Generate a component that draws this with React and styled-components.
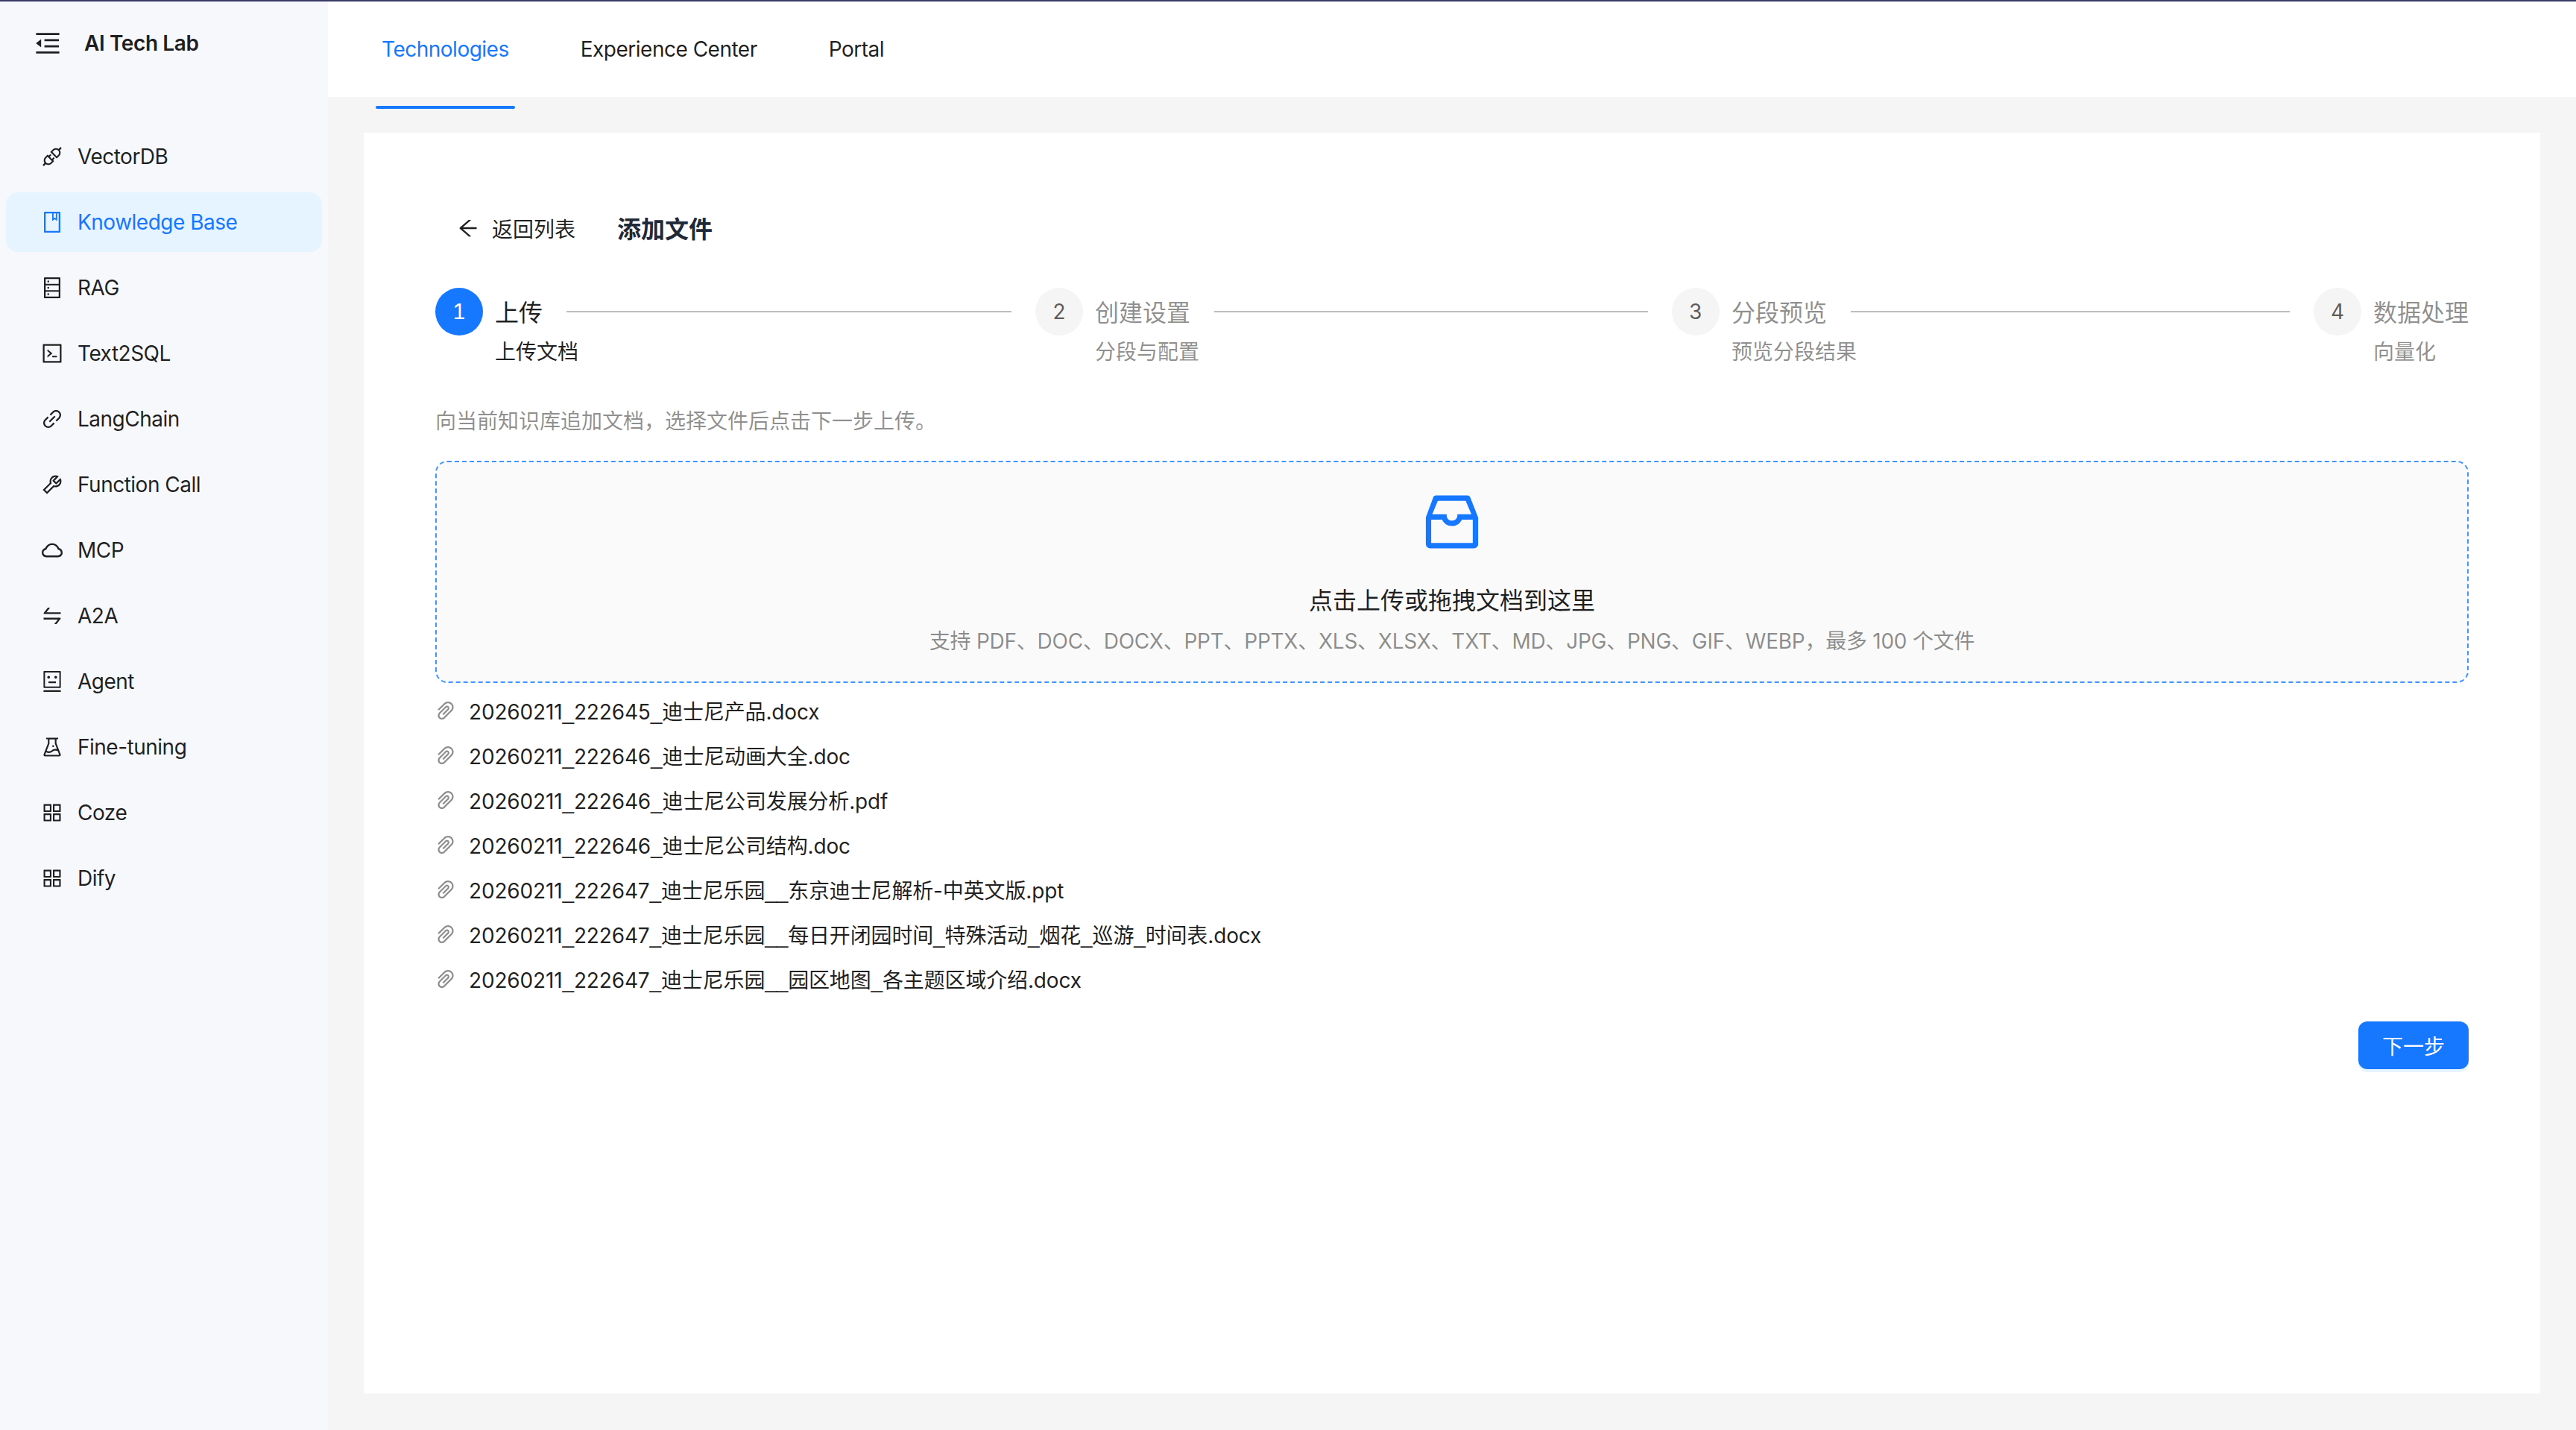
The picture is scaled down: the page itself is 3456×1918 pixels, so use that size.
import React from "react";
import styled, { createGlobalStyle } from "styled-components";
import {
  AiOutlineApi,
  AiOutlineAppstore,
  AiOutlineArrowLeft,
  AiOutlineBook,
  AiOutlineCloud,
  AiOutlineCode,
  AiOutlineDatabase,
  AiOutlineExperiment,
  AiOutlineInbox,
  AiOutlineLink,
  AiOutlineMenuFold,
  AiOutlinePaperClip,
  AiOutlineRobot,
  AiOutlineSwap,
  AiOutlineTool,
} from "react-icons/ai";

const GlobalStyle = createGlobalStyle`
  html, body, #root {
    margin: 0;
    height: 100%;
  }
  body {
    font-family: Inter, "Noto Sans CJK SC", sans-serif;
    font-size: 28px;
    color: rgba(0, 0, 0, 0.88);
  }
  * {
    box-sizing: border-box;
  }
`;

const Page = styled.div`
  display: flex;
  flex-direction: column;
  height: 100%;
  border-top: 2px solid #3a3a68;
  overflow: hidden;
`;

const Body = styled.div`
  display: flex;
  flex: 1;
  min-height: 0;
`;

const Sidebar = styled.aside`
  width: 440px;
  flex: none;
  background: #f6f8fc;
`;

const Brand = styled.div`
  display: flex;
  align-items: center;
  height: 112px;
  margin-bottom: 56px;
  padding-left: 44px;
  gap: 29px;
  font-weight: 600;
  letter-spacing: -0.4px;
  color: #1f1f1f;

  svg {
    flex: none;
  }
`;

const MenuList = styled.nav`
  display: flex;
  flex-direction: column;
  gap: 8px;
  padding: 0 8px;
`;

const MenuItem = styled.div`
  display: flex;
  align-items: center;
  gap: 18px;
  height: 80px;
  padding-left: 46px;
  border-radius: 16px;
  letter-spacing: -0.5px;
  background: ${(p) => (p.$active ? "#e6f4ff" : "transparent")};
  color: ${(p) => (p.$active ? "#1677ff" : "rgba(0, 0, 0, 0.88)")};
`;

const Main = styled.main`
  flex: 1;
  min-width: 0;
  display: flex;
  flex-direction: column;
  background: #f5f5f5;
`;

const Header = styled.header`
  display: flex;
  align-items: center;
  gap: 96px;
  height: 128px;
  flex: none;
  padding-left: 72px;
  background: #fff;
`;

const Tab = styled.div`
  position: relative;
  letter-spacing: -0.5px;
  color: ${(p) => (p.$active ? "#1677ff" : "rgba(0, 0, 0, 0.88)")};

  &::after {
    content: "";
    display: ${(p) => (p.$active ? "block" : "none")};
    position: absolute;
    left: -8px;
    right: -8px;
    top: 93px;
    height: 4px;
    border-radius: 2px;
    background: #1677ff;
  }
`;

const Content = styled.div`
  flex: 1;
  min-height: 0;
  padding: 48px 48px 49px;
`;

const Card = styled.section`
  height: 100%;
  padding: 96px 96px 0;
  background: #fff;
`;

const TitleRow = styled.div`
  display: flex;
  align-items: center;
  height: 64px;
  margin-bottom: 48px;
`;

const BackLink = styled.div`
  display: flex;
  align-items: center;
  gap: 16px;
  padding-left: 28px;
`;

const PageTitle = styled.h1`
  margin: 0 0 0 56px;
  padding-bottom: 2px;
  font-size: 32px;
  font-weight: 600;
  color: #1f2937;
`;

const Steps = styled.div`
  display: grid;
  grid-template-columns: 773px 854px 861px 240px;
`;

const Step = styled.div`
  display: flex;
  gap: 16px;
  padding-left: ${(p) => (p.$first ? 0 : 32)}px;
`;

const StepDot = styled.div`
  flex: none;
  width: 64px;
  height: 64px;
  display: flex;
  align-items: center;
  justify-content: center;
  border-radius: 50%;
  font-variant-numeric: tabular-nums;
  background: ${(p) => (p.$active ? "#1677ff" : "#f5f5f5")};
  color: ${(p) => (p.$active ? "#fff" : "rgba(0, 0, 0, 0.65)")};
`;

const StepBody = styled.div`
  flex: 1;
  min-width: 0;
`;

const StepTitle = styled.div`
  display: flex;
  align-items: center;
  height: 64px;
  padding-bottom: 2px;
  font-size: 32px;
  white-space: nowrap;
  color: ${(p) => (p.$active ? "rgba(0, 0, 0, 0.88)" : "rgba(0, 0, 0, 0.45)")};

  &::after {
    content: "";
    display: ${(p) => (p.$last ? "none" : "block")};
    flex: 1;
    height: 2px;
    margin: 2px 0 0 32px;
    background: #bdbdbd;
  }
`;

const StepDesc = styled.div`
  line-height: 44px;
  white-space: nowrap;
  color: ${(p) => (p.$active ? "rgba(0, 0, 0, 0.88)" : "rgba(0, 0, 0, 0.45)")};
`;

const Hint = styled.p`
  margin: 49px 0 31px;
  line-height: 44px;
  color: rgba(0, 0, 0, 0.45);
`;

const Dropzone = styled.div`
  display: flex;
  flex-direction: column;
  align-items: center;
  height: 298px;
  padding-top: 32px;
  border: 2px dashed #4096ff;
  border-radius: 16px;
  background: #fafafa;
  color: #1677ff;
`;

const DropTitle = styled.div`
  margin-top: 36px;
  font-size: 32px;
  line-height: 44px;
  color: rgba(0, 0, 0, 0.88);
`;

const DropHint = styled.div`
  margin-top: 10px;
  line-height: 44px;
  letter-spacing: -0.25px;
  color: rgba(0, 0, 0, 0.45);
`;

const FileList = styled.ul`
  margin: 7px 0 0;
  padding: 0;
  list-style: none;
`;

const FileRow = styled.li`
  display: flex;
  align-items: center;
  gap: 15px;
  height: 60px;
  margin-left: -2px;
  letter-spacing: -0.15px;

  svg {
    flex: none;
    color: rgba(0, 0, 0, 0.45);
  }
`;

// Inter's underscore is too short next to the reference, Liberation's is the right width
const Underscore = styled.span`
  font-family: "Liberation Sans", sans-serif;
`;

const Actions = styled.div`
  display: flex;
  justify-content: flex-end;
  margin-top: 27px;
`;

const PrimaryButton = styled.button`
  width: 148px;
  height: 64px;
  padding: 0;
  border: none;
  border-radius: 12px;
  background: #1677ff;
  box-shadow: 0 4px 0 rgba(5, 145, 255, 0.1);
  font: inherit;
  color: #fff;
`;

const menu = [
  { label: "VectorDB", icon: AiOutlineApi },
  { label: "Knowledge Base", icon: AiOutlineBook, active: true },
  { label: "RAG", icon: AiOutlineDatabase },
  { label: "Text2SQL", icon: AiOutlineCode },
  { label: "LangChain", icon: AiOutlineLink },
  { label: "Function Call", icon: AiOutlineTool },
  { label: "MCP", icon: AiOutlineCloud },
  { label: "A2A", icon: AiOutlineSwap },
  { label: "Agent", icon: AiOutlineRobot },
  { label: "Fine-tuning", icon: AiOutlineExperiment },
  { label: "Coze", icon: AiOutlineAppstore },
  { label: "Dify", icon: AiOutlineAppstore },
];

const steps = [
  { title: "上传", desc: "上传文档" },
  { title: "创建设置", desc: "分段与配置" },
  { title: "分段预览", desc: "预览分段结果" },
  { title: "数据处理", desc: "向量化" },
];

const files = [
  "20260211_222645_迪士尼产品.docx",
  "20260211_222646_迪士尼动画大全.doc",
  "20260211_222646_迪士尼公司发展分析.pdf",
  "20260211_222646_迪士尼公司结构.doc",
  "20260211_222647_迪士尼乐园__东京迪士尼解析-中英文版.ppt",
  "20260211_222647_迪士尼乐园__每日开闭园时间_特殊活动_烟花_巡游_时间表.docx",
  "20260211_222647_迪士尼乐园__园区地图_各主题区域介绍.docx",
];

const FileName = ({ name }) => (
  <span>
    {name.split(/(_)/).map((part, i) =>
      part === "_" ? <Underscore key={i}>_</Underscore> : part
    )}
  </span>
);

export default function App() {
  return (
    <>
      <GlobalStyle />
      <Page>
        <Body>
          <Sidebar>
            <Brand>
              <AiOutlineMenuFold size={40} />
              AI Tech Lab
            </Brand>
            <MenuList>
              {menu.map(({ label, icon: Icon, active }) => (
                <MenuItem key={label} $active={active}>
                  <Icon size={32} />
                  {label}
                </MenuItem>
              ))}
            </MenuList>
          </Sidebar>
          <Main>
            <Header>
              <Tab $active>Technologies</Tab>
              <Tab>Experience Center</Tab>
              <Tab>Portal</Tab>
            </Header>
            <Content>
              <Card>
                <TitleRow>
                  <BackLink>
                    <AiOutlineArrowLeft size={32} />
                    返回列表
                  </BackLink>
                  <PageTitle>添加文件</PageTitle>
                </TitleRow>
                <Steps>
                  {steps.map((step, i) => (
                    <Step key={step.title} $first={i === 0}>
                      <StepDot $active={i === 0}>{i + 1}</StepDot>
                      <StepBody>
                        <StepTitle $active={i === 0} $last={i === steps.length - 1}>
                          {step.title}
                        </StepTitle>
                        <StepDesc $active={i === 0}>{step.desc}</StepDesc>
                      </StepBody>
                    </Step>
                  ))}
                </Steps>
                <Hint>向当前知识库追加文档，选择文件后点击下一步上传。</Hint>
                <Dropzone>
                  <AiOutlineInbox size={96} />
                  <DropTitle>点击上传或拖拽文档到这里</DropTitle>
                  <DropHint>
                    支持 PDF、DOC、DOCX、PPT、PPTX、XLS、XLSX、TXT、MD、JPG、PNG、GIF、WEBP，最多 100 个文件
                  </DropHint>
                </Dropzone>
                <FileList>
                  {files.map((name) => (
                    <FileRow key={name}>
                      <AiOutlinePaperClip size={32} />
                      <FileName name={name} />
                    </FileRow>
                  ))}
                </FileList>
                <Actions>
                  <PrimaryButton>下一步</PrimaryButton>
                </Actions>
              </Card>
            </Content>
          </Main>
        </Body>
      </Page>
    </>
  );
}
